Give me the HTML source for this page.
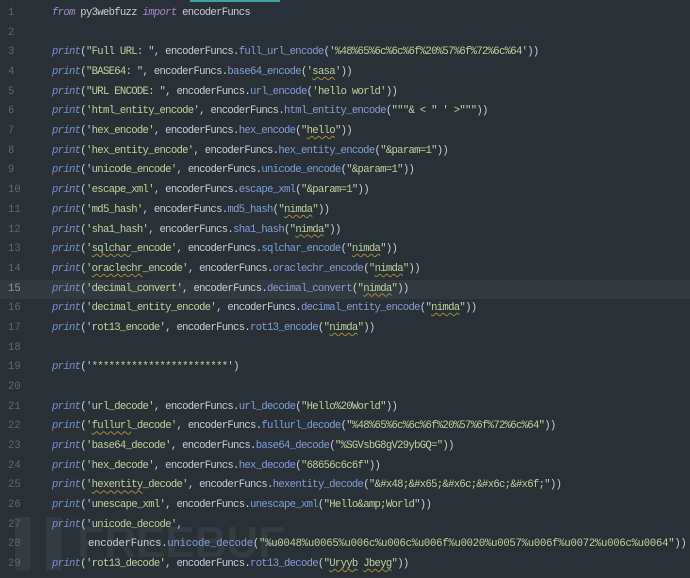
<!DOCTYPE html>
<html><head><meta charset="utf-8"><style>
body{margin:0;width:690px;height:576px;background:#2a3136;overflow:hidden;position:relative;font-family:"Liberation Mono",monospace;font-size:10.6px;letter-spacing:-0.7px;color:#c9cdd1}
.top{position:absolute;left:190px;top:0;width:90px;height:2px;background:#3aa6a0}
.w{position:absolute;left:0;top:2px;width:690px;height:576px}
.l{position:absolute;left:0;width:690px;height:19.68px;line-height:19.68px;white-space:pre}
.n{position:absolute;left:8px;width:22px;color:#5c6870;text-align:left;letter-spacing:0}
.c{position:absolute;left:52px}
.hl{background:#323a40}
.p{color:#7193cf;font-style:italic}
.k{color:#a08ad0;font-style:italic}
.s{color:#bfd0a0}
.m{color:#7d9fd8}
.u{text-decoration:underline wavy #a08a40;text-underline-offset:2px;text-decoration-thickness:1px}
.wm{position:absolute;left:15px;top:518px;font-family:"Liberation Sans",sans-serif;font-size:44px;font-weight:bold;color:#343c41;letter-spacing:0}
</style></head><body>
<div class="top"></div>
<div class="wm">▌▌FREEBUF</div>
<div class="w">
<div class="l" style="top:2px"><span class="n">1</span><span class="c"><span class="k">from</span> py3webfuzz <span class="k">import</span> encoderFuncs</span></div>
<div class="l" style="top:21.7px"><span class="n">2</span></div>
<div class="l" style="top:41.4px"><span class="n">3</span><span class="c"><span class="p">print</span>(<span class="s">"Full URL: "</span>, encoderFuncs.<span class="m">full_url_encode</span>(<span class="s">'%48%65%6c%6c%6f%20%57%6f%72%6c%64'</span>))</span></div>
<div class="l" style="top:61.0px"><span class="n">4</span><span class="c"><span class="p">print</span>(<span class="s">"BASE64: "</span>, encoderFuncs.<span class="m">base64_encode</span>(<span class="s">'<span class="u">sasa</span>'</span>))</span></div>
<div class="l" style="top:80.7px"><span class="n">5</span><span class="c"><span class="p">print</span>(<span class="s">"URL ENCODE: "</span>, encoderFuncs.<span class="m">url_encode</span>(<span class="s">'hello world'</span>))</span></div>
<div class="l" style="top:100.4px"><span class="n">6</span><span class="c"><span class="p">print</span>(<span class="s">'html_entity_encode'</span>, encoderFuncs.<span class="m">html_entity_encode</span>(<span class="s">"""&amp; &lt; " ' &gt;"""</span>))</span></div>
<div class="l" style="top:120.1px"><span class="n">7</span><span class="c"><span class="p">print</span>(<span class="s">'hex_encode'</span>, encoderFuncs.<span class="m">hex_encode</span>(<span class="s">"<span class="u">hello</span>"</span>))</span></div>
<div class="l" style="top:139.8px"><span class="n">8</span><span class="c"><span class="p">print</span>(<span class="s">'hex_entity_encode'</span>, encoderFuncs.<span class="m">hex_entity_encode</span>(<span class="s">"&amp;param=1"</span>))</span></div>
<div class="l" style="top:159.4px"><span class="n">9</span><span class="c"><span class="p">print</span>(<span class="s">'unicode_encode'</span>, encoderFuncs.<span class="m">unicode_encode</span>(<span class="s">"&amp;param=1"</span>))</span></div>
<div class="l" style="top:179.1px"><span class="n">10</span><span class="c"><span class="p">print</span>(<span class="s">'escape_xml'</span>, encoderFuncs.<span class="m">escape_xml</span>(<span class="s">"&amp;param=1"</span>))</span></div>
<div class="l" style="top:198.8px"><span class="n">11</span><span class="c"><span class="p">print</span>(<span class="s">'md5_hash'</span>, encoderFuncs.<span class="m">md5_hash</span>(<span class="s">"<span class="u">nimda</span>"</span>))</span></div>
<div class="l" style="top:218.5px"><span class="n">12</span><span class="c"><span class="p">print</span>(<span class="s">'sha1_hash'</span>, encoderFuncs.<span class="m">sha1_hash</span>(<span class="s">"<span class="u">nimda</span>"</span>))</span></div>
<div class="l" style="top:238.2px"><span class="n">13</span><span class="c"><span class="p">print</span>(<span class="s">'<span class="u">sqlchar</span>_encode'</span>, encoderFuncs.<span class="m">sqlchar_encode</span>(<span class="s">"<span class="u">nimda</span>"</span>))</span></div>
<div class="l" style="top:257.8px"><span class="n">14</span><span class="c"><span class="p">print</span>(<span class="s">'<span class="u">oraclechr</span>_encode'</span>, encoderFuncs.<span class="m">oraclechr_encode</span>(<span class="s">"<span class="u">nimda</span>"</span>))</span></div>
<div class="l hl" style="top:277.5px"><span class="n" style="color:#8a969e">15</span><span class="c"><span class="p">print</span>(<span class="s">'decimal_convert'</span>, encoderFuncs.<span class="m">decimal_convert</span>(<span class="s">"<span class="u">nimda</span>"</span>))</span></div>
<div class="l" style="top:297.2px"><span class="n">16</span><span class="c"><span class="p">print</span>(<span class="s">'decimal_entity_encode'</span>, encoderFuncs.<span class="m">decimal_entity_encode</span>(<span class="s">"<span class="u">nimda</span>"</span>))</span></div>
<div class="l" style="top:316.9px"><span class="n">17</span><span class="c"><span class="p">print</span>(<span class="s">'rot13_encode'</span>, encoderFuncs.<span class="m">rot13_encode</span>(<span class="s">"<span class="u">nimda</span>"</span>))</span></div>
<div class="l" style="top:336.6px"><span class="n">18</span></div>
<div class="l" style="top:356.2px"><span class="n">19</span><span class="c"><span class="p">print</span>(<span class="s">'************************'</span>)</span></div>
<div class="l" style="top:375.9px"><span class="n">20</span></div>
<div class="l" style="top:395.6px"><span class="n">21</span><span class="c"><span class="p">print</span>(<span class="s">'url_decode'</span>, encoderFuncs.<span class="m">url_decode</span>(<span class="s">"Hello%20World"</span>))</span></div>
<div class="l" style="top:415.3px"><span class="n">22</span><span class="c"><span class="p">print</span>(<span class="s">'<span class="u">fullurl</span>_decode'</span>, encoderFuncs.<span class="m">fullurl_decode</span>(<span class="s">"%48%65%6c%6c%6f%20%57%6f%72%6c%64"</span>))</span></div>
<div class="l" style="top:435.0px"><span class="n">23</span><span class="c"><span class="p">print</span>(<span class="s">'base64_decode'</span>, encoderFuncs.<span class="m">base64_decode</span>(<span class="s">"%SGVsbG8gV29ybGQ="</span>))</span></div>
<div class="l" style="top:454.6px"><span class="n">24</span><span class="c"><span class="p">print</span>(<span class="s">'hex_decode'</span>, encoderFuncs.<span class="m">hex_decode</span>(<span class="s">"68656c6c6f"</span>))</span></div>
<div class="l" style="top:474.3px"><span class="n">25</span><span class="c"><span class="p">print</span>(<span class="s">'<span class="u">hexentity</span>_decode'</span>, encoderFuncs.<span class="m">hexentity_decode</span>(<span class="s">"&amp;#x48;&amp;#x65;&amp;#x6c;&amp;#x6c;&amp;#x6f;"</span>))</span></div>
<div class="l" style="top:494.0px"><span class="n">26</span><span class="c"><span class="p">print</span>(<span class="s">'unescape_xml'</span>, encoderFuncs.<span class="m">unescape_xml</span>(<span class="s">"Hello&amp;amp;World"</span>))</span></div>
<div class="l" style="top:513.7px"><span class="n">27</span><span class="c"><span class="p">print</span>(<span class="s">'unicode_decode'</span>,</span></div>
<div class="l" style="top:533.4px"><span class="n">28</span><span class="c" style="left:88px;letter-spacing:-0.25px">encoderFuncs.<span class="m">unicode_decode</span>(<span class="s">"%u0048%u0065%u006c%u006c%u006f%u0020%u0057%u006f%u0072%u006c%u0064"</span>))</span></div>
<div class="l" style="top:553.0px"><span class="n">29</span><span class="c"><span class="p">print</span>(<span class="s">'rot13_decode'</span>, encoderFuncs.<span class="m">rot13_decode</span>(<span class="s">"<span class="u">Uryyb</span> <span class="u">Jbeyg</span>"</span>))</span></div>
</div>
</body></html>
